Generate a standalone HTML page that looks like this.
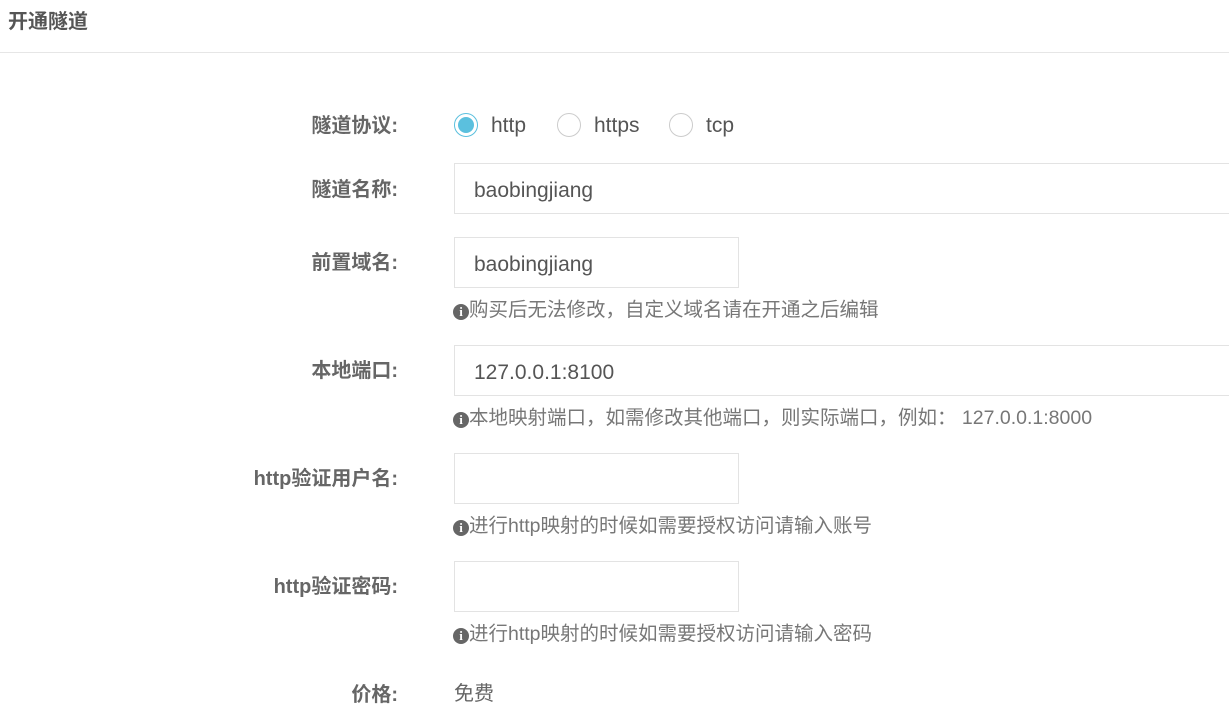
<!DOCTYPE html>
<html><head><meta charset="utf-8"><style>
*{margin:0;padding:0;box-sizing:border-box}
body{width:1229px;height:717px;overflow:hidden;background:#fff;font-family:"Liberation Sans","Noto Sans CJK SC",sans-serif;color:#666;position:relative}
.a{position:absolute;line-height:1.2}
.h{left:8px;top:10px;font-size:20px;font-weight:bold;color:#555}
.line{left:0;top:52px;width:1229px;height:1px;background:#e6e6e6}
.lab{right:831px;font-size:20px;font-weight:bold;color:#666;white-space:nowrap}
.inp{left:454px;height:51px;border:1px solid #e3e3e3;font-size:21px;color:#555;padding:14px 0 0 19px}
.help{left:453px;font-size:19.5px;color:#777;white-space:nowrap}
.help i{display:inline-block;width:16px;height:16px;border-radius:50%;background:#666;color:#fff;font-style:normal;font-weight:bold;font-size:13px;text-align:center;line-height:16px;vertical-align:0px;font-family:"Liberation Serif",serif}
.rad{width:24px;height:24px;border:1px solid #ccc;border-radius:50%;top:113px}
.rt{top:113px;font-size:21px;color:#555}
</style></head><body>
<div class="a h">开通隧道</div>
<div class="a line"></div>

<div class="a lab" style="top:114px">隧道协议:</div>
<div class="a rad" style="left:454px;border-color:#5bc0de"><div style="position:absolute;left:3px;top:3px;width:16px;height:16px;border-radius:50%;background:#5bc0de"></div></div>
<div class="a rt" style="left:491px">http</div>
<div class="a rad" style="left:557px"></div>
<div class="a rt" style="left:594px">https</div>
<div class="a rad" style="left:669px"></div>
<div class="a rt" style="left:706px">tcp</div>

<div class="a lab" style="top:178px">隧道名称:</div>
<div class="a inp" style="top:163px;width:800px">baobingjiang</div>

<div class="a lab" style="top:251px">前置域名:</div>
<div class="a inp" style="top:237px;width:285px">baobingjiang</div>
<div class="a help" style="top:299px"><i>i</i>购买后无法修改，自定义域名请在开通之后编辑</div>

<div class="a lab" style="top:359px">本地端口:</div>
<div class="a inp" style="top:345px;width:800px">127.0.0.1:8100</div>
<div class="a help" style="top:407px"><i>i</i>本地映射端口，如需修改其他端口，则实际端口，例如： 127.0.0.1:8000</div>

<div class="a lab" style="top:467px">http验证用户名:</div>
<div class="a inp" style="top:453px;width:285px"></div>
<div class="a help" style="top:515px"><i>i</i>进行http映射的时候如需要授权访问请输入账号</div>

<div class="a lab" style="top:575px">http验证密码:</div>
<div class="a inp" style="top:561px;width:285px"></div>
<div class="a help" style="top:623px"><i>i</i>进行http映射的时候如需要授权访问请输入密码</div>

<div class="a lab" style="top:683px">价格:</div>
<div class="a" style="left:454px;top:682px;font-size:20px;color:#666">免费</div>
</body></html>
